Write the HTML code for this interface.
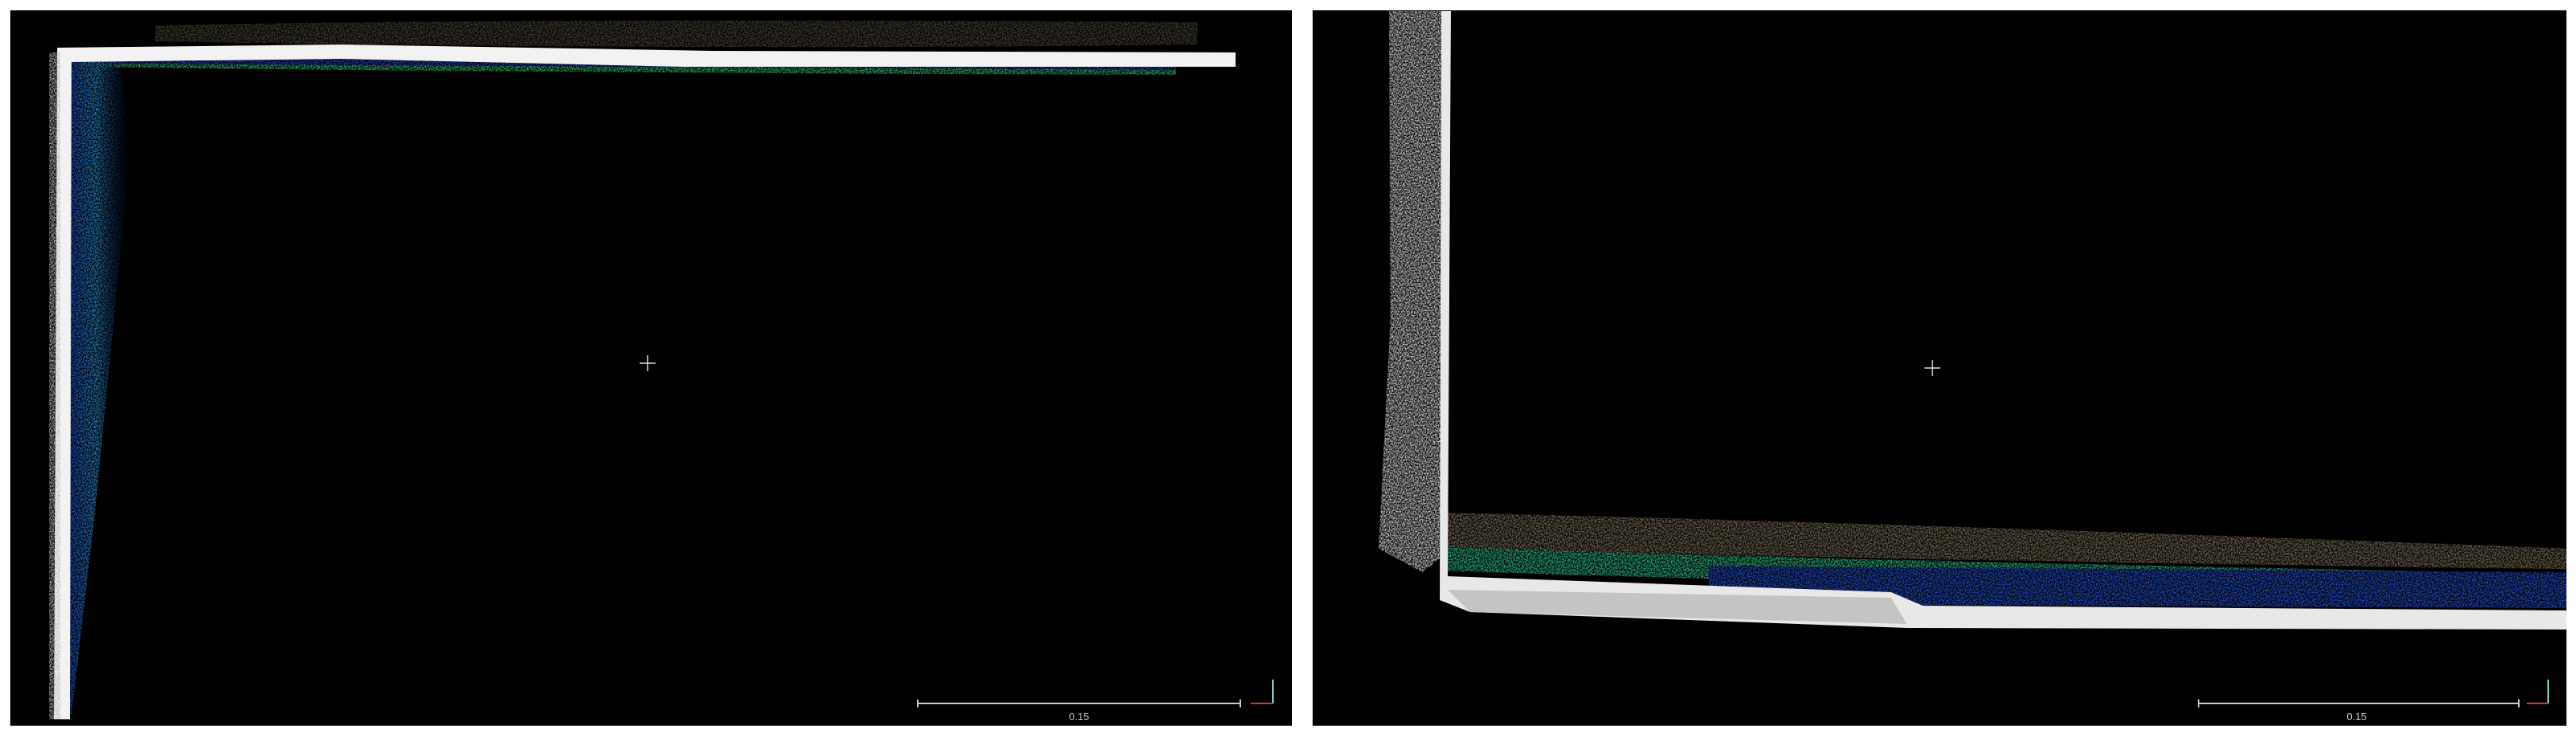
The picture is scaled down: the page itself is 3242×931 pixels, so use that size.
<!DOCTYPE html>
<html><head><meta charset="utf-8"><style>
html,body{margin:0;padding:0;background:#fff;width:3242px;height:931px;overflow:hidden}
svg{display:block}
</style></head><body>
<svg width="3242" height="931" viewBox="0 0 3242 931" xmlns="http://www.w3.org/2000/svg">
<defs>
<filter id="n" x="-5%" y="-5%" width="110%" height="110%">
<feTurbulence type="fractalNoise" baseFrequency="0.6" numOctaves="1" seed="3" result="t"/>
<feColorMatrix in="t" type="matrix" values="0 0 0 0 0  0 0 0 0 0  0 0 0 0 0  0 0 0 -2.2 1.5" result="m"/>
<feComposite in="SourceGraphic" in2="m" operator="in"/>
</filter>
<linearGradient id="gl" x1="0" y1="0" x2="1" y2="0">
<stop offset="0" stop-color="#1f3cc8"/><stop offset="0.5" stop-color="#2a8fd0"/><stop offset="1" stop-color="#1c2a8a" stop-opacity="0"/>
</linearGradient>
</defs>
<rect width="3242" height="931" fill="#fff"/>
<!-- LEFT PANEL -->
<rect x="13" y="13" width="1613" height="900" fill="#000"/>
<g filter="url(#n)">
<path d="M195 32 Q700 22 1507 28 L1507 56 Q900 64 195 52Z" fill="#4a4438"/>
<path d="M80 72 Q300 62 600 78 L1480 86 L1480 94 Q700 92 90 84Z" fill="#2fbf6a"/>
<path d="M80 70 L600 64 L1000 72 L1480 80 L1480 88 L90 80Z" fill="#2a3fc0"/>
<path d="M78 72 L150 80 L165 180 L120 640 L90 900 L82 900Z" fill="url(#gl)"/>
</g>
<path d="M72 60 L430 56 L900 64 L1555 66 L1555 84 L860 84 L430 74 L90 78 L88 905 L68 905 Z" fill="#f2f2f2"/>
<path d="M62 66 L76 66 L76 905 L62 905Z" fill="#bbb" filter="url(#n)"/>
<g stroke="#ddd" stroke-width="1.5"><line x1="805" y1="457" x2="825" y2="457"/><line x1="815" y1="447" x2="815" y2="467"/></g>
<g stroke="#ccc" stroke-width="2"><line x1="1155" y1="885" x2="1561" y2="885"/><line x1="1155" y1="880" x2="1155" y2="890"/><line x1="1561" y1="880" x2="1561" y2="890"/></g>
<text x="1358" y="906" fill="#ccc" font-family="Liberation Sans,sans-serif" font-size="13" text-anchor="middle">0.15</text>
<line x1="1602" y1="855" x2="1602" y2="885" stroke="#7cc" stroke-width="2"/>
<line x1="1574" y1="885" x2="1602" y2="885" stroke="#d33" stroke-width="2"/>
<!-- RIGHT PANEL -->
<rect x="1652" y="13" width="1578" height="900" fill="#000"/>
<g filter="url(#n)">
<path d="M1748 14 L1815 14 L1815 700 L1790 720 L1735 690 L1750 400 Z" fill="#e0e0e0"/>
<path d="M1815 645 Q2300 655 3230 690 L3230 716 Q2400 705 1815 690Z" fill="#7a6e58"/>
<path d="M1815 688 Q2300 705 3230 722 L3230 745 Q2400 738 1815 718Z" fill="#2dc08a"/>
<path d="M2150 712 L3230 720 L3230 765 L2150 760Z" fill="#2450d0"/>
</g>
<path d="M1814 14 L1826 14 L1822 725 L2100 735 L2380 745 L2420 762 L3230 768 L3230 792 L2400 790 L1850 770 L1812 755 Z" fill="#e8e8e8"/>
<path d="M1822 742 L2380 752 L2400 785 L1850 770Z" fill="#c4c4c4"/>
<g stroke="#ddd" stroke-width="1.5"><line x1="2422" y1="463" x2="2442" y2="463"/><line x1="2432" y1="453" x2="2432" y2="473"/></g>
<g stroke="#ccc" stroke-width="2"><line x1="2767" y1="885" x2="3170" y2="885"/><line x1="2767" y1="880" x2="2767" y2="890"/><line x1="3170" y1="880" x2="3170" y2="890"/></g>
<text x="2966" y="906" fill="#ccc" font-family="Liberation Sans,sans-serif" font-size="13" text-anchor="middle">0.15</text>
<line x1="3207" y1="855" x2="3207" y2="885" stroke="#7cc" stroke-width="2"/>
<line x1="3180" y1="885" x2="3207" y2="885" stroke="#d33" stroke-width="2"/>
</svg>
</body></html>
